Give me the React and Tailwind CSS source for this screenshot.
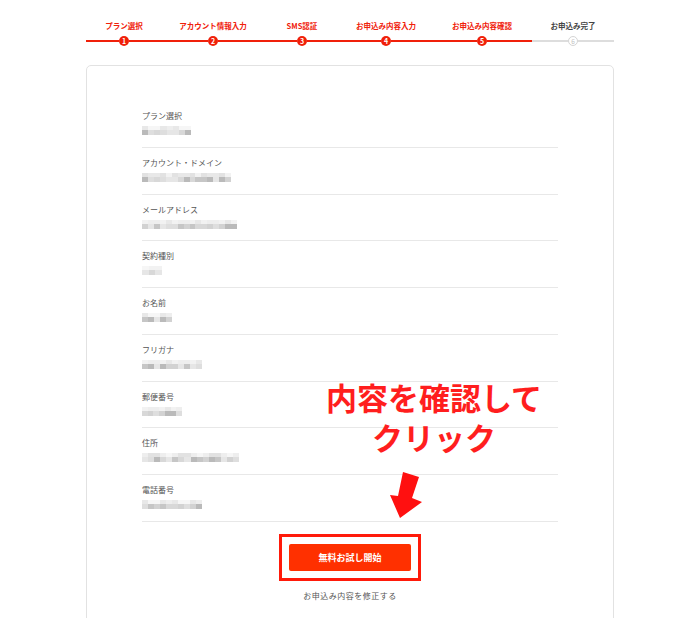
const steps = [
  { label: 'プラン選択', w: 'w-[76px]' },
  { label: 'アカウント情報入力', w: 'w-[102px]' },
  { label: 'SMS認証', w: 'w-[76px]' },
  { label: 'お申込み内容入力', w: 'w-[92px]' },
  { label: 'お申込み内容確認', w: 'w-[100px]' },
  { label: 'お申込み完了', w: 'w-[82px]' },
];

const CURRENT = 6;

const rows = [
  { label: 'プラン選択', w: 49, seed: 3 },
  { label: 'アカウント・ドメイン', w: 89, seed: 11 },
  { label: 'メールアドレス', w: 95, seed: 7 },
  { label: '契約種別', w: 20, seed: 5 },
  { label: 'お名前', w: 30, seed: 13 },
  { label: 'フリガナ', w: 60, seed: 2 },
  { label: '郵便番号', w: 40, seed: 17 },
  { label: '住所', w: 97, seed: 19 },
  { label: '電話番号', w: 60, seed: 23 },
];

const topTones = ['bg-[#f6f6f6]', 'bg-[#eeeeee]', 'bg-[#e8e8e8]', 'bg-[#f2f2f2]', 'bg-[#e2e2e2]'];
const bottomTones = ['bg-[#dedede]', 'bg-[#d2d2d2]', 'bg-[#c6c6c6]', 'bg-[#e6e6e6]', 'bg-[#bababa]', 'bg-[#d8d8d8]'];

function Mosaic({ w, seed }) {
  const n = Math.max(1, Math.round(w / 6));
  const cells = Array.from({ length: n }, (_, i) => i);
  const pick = (i, k, len) => (i * 7 + seed * 13 + k * 5 + ((i * i + seed) % 5)) % len;
  return (
    <div className="flex flex-col" style={{ width: w }}>
      <div className="flex h-[4px]">
        {cells.map((i) => (
          <div key={i} className={`flex-1 ${topTones[pick(i, 1, topTones.length)]}`} />
        ))}
      </div>
      <div className="flex h-[5px]">
        {cells.map((i) => (
          <div key={i} className={`flex-1 ${bottomTones[pick(i, 2, bottomTones.length)]}`} />
        ))}
      </div>
    </div>
  );
}

function Stepper() {
  return (
    <div className="mx-auto flex w-[528px] pt-[21px]">
      {steps.map((s, i) => {
        const n = i + 1;
        const done = n < CURRENT;
        const line = done ? 'bg-[#f0200a]' : 'bg-[#dddddd]';
        return (
          <div key={s.label} className={`${s.w} flex flex-col items-center`}>
            <span className={`text-[7.5px] leading-[10px] font-bold whitespace-nowrap ${done ? 'text-[#f0200a]' : 'text-[#444]'}`}>
              {s.label}
            </span>
            <div className="mt-[5px] flex h-[10px] w-full items-center">
              <div className={`h-[2px] flex-1 ${line}`} />
              {done ? (
                <div className="flex h-[10px] w-[10px] items-center justify-center rounded-full bg-[#f0200a] text-[7px] font-bold leading-none text-white">
                  {n}
                </div>
              ) : (
                <div className="flex h-[10px] w-[10px] items-center justify-center rounded-full border border-[#d4d4d4] bg-white text-[6.5px] leading-none text-[#c4c4c4]">
                  {n}
                </div>
              )}
              <div className={`h-[2px] flex-1 ${line}`} />
            </div>
          </div>
        );
      })}
    </div>
  );
}

export default function App() {
  return (
    <div
      className="relative min-h-[618px] bg-white"
      style={{ fontFamily: '"Noto Sans CJK JP", "Noto Sans", sans-serif' }}
    >
      <Stepper />

      <div className="mx-auto mt-[19px] w-[528px] rounded-[5px] border border-[#e2e2e2] px-[55px] pt-[35px] pb-[40px]">
        {rows.map((r) => (
          <div key={r.label} className="border-b border-[#e8e8e8] pt-[9px] pb-[11.75px]">
            <div className="text-[8px] leading-[12px] text-[#555]">{r.label}</div>
            <div className="mt-[4px]">
              <Mosaic w={r.w} seed={r.seed} />
            </div>
          </div>
        ))}

        <div className="mt-[12px] flex flex-col items-center">
          <div className="border-[3px] border-[#ff1a0a] p-[7px]">
            <button className="flex h-[27px] w-[122px] items-center justify-center rounded-[2px] bg-[#ff3000] text-[9px] font-bold text-white">
              無料お試し開始
            </button>
          </div>
          <div className="mt-[9px] text-[8px] leading-[12px] tracking-[0.5px] text-[#555]">
            お申込み内容を修正する
          </div>
        </div>
      </div>

      <div className="absolute left-[318px] top-[377px] flex w-[232px] flex-col items-center text-[31px] font-bold text-[#ff1e1e]">
        <div className="h-[40px] leading-[40px]">内容を確認して</div>
        <div className="h-[40px] leading-[40px]">クリック</div>
      </div>

      <svg className="absolute left-[388px] top-[470px]" width="36" height="50" viewBox="0 0 36 50">
        <polygon points="15,2 31,7 24,28 34,32 12,48 2,25 10,26" fill="#ff1010" />
      </svg>
    </div>
  );
}
